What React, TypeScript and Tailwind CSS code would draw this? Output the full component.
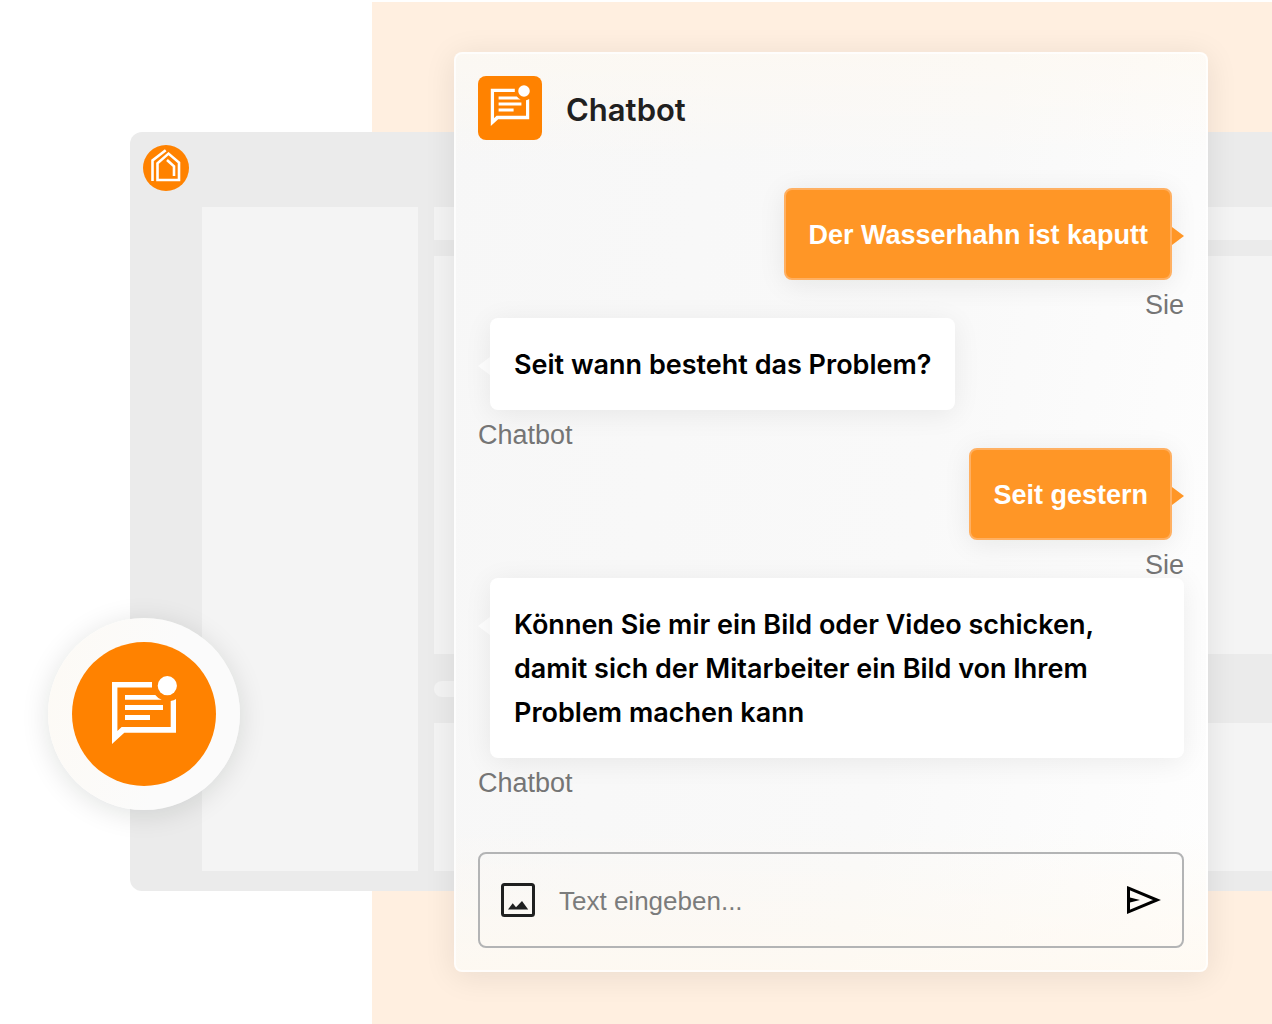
import type { ReactNode } from "react";

function ChatIcon({ className }: { className: string }) {
  return (
    <svg viewBox="0 0 80 80" className={className} fill="#fff" aria-hidden="true">
      <path d="M8 8H48V13.4H13.4V57L17.6 53H66.7V27Q70 26.400 72 25V58.700H20.300L8 70Z" />
      <path d="M21 21H51.300Q54 24.500 57.700 25.700H21ZM21 31H59V36H21ZM21 41H46V46H21Z" />
      <circle cx="63.300" cy="11.700" r="9.600" />
    </svg>
  );
}

function HouseLogo() {
  return (
    <svg viewBox="0 0 46 46" className="size-[46px]" fill="none" stroke="#fff" strokeWidth="2.600" aria-hidden="true">
      <circle cx="23" cy="23" r="23" fill="#ff8200" stroke="none" />
      <path d="M9.500 36V15.500L22.700 5.300" />
      <path d="M14.500 35H36V17.500L25.500 8.600L14.500 18.300Z" />
      <path d="M24 15L31 21.300V31" />
    </svg>
  );
}

function Dashboard() {
  return (
    <div className="col-start-1 row-start-1 mt-[132px] mb-[133px] ml-[130px] flex flex-col rounded-l-xl bg-[#ebebeb] pb-5">
      <div className="h-[75px] shrink-0 px-[13px] pt-[13px]">
        <HouseLogo />
      </div>
      <div className="flex flex-1 gap-4 pl-[72px]">
        <div className="w-[216px] bg-[#f4f4f4]" />
        <div className="flex flex-1 flex-col">
          <div className="h-[33px] bg-[#f4f4f4]" />
          <div className="mt-4 flex-1 bg-[#f4f4f4]" />
          <div className="flex h-[69px] items-center">
            <div className="h-4 w-40 rounded-full bg-[#f4f4f4]" />
          </div>
          <div className="h-[148px] bg-[#f4f4f4]" />
        </div>
      </div>
    </div>
  );
}

function UserMessage({ children }: { children: ReactNode }) {
  return (
    <div className="flex flex-col items-end">
      <div className="flex items-start">
        <p className="rounded-lg border-2 border-[#ffb062] bg-[#ff9626] px-[22px] pt-[23px] pb-[21px] font-['Liberation_Sans',sans-serif] text-[27px] leading-[44px] font-bold text-white shadow-[0_4px_28px_rgba(0,20,15,0.08)]">
          {children}
        </p>
        <svg viewBox="0 0 12 18" className="mt-[39px] h-[18px] w-3" aria-hidden="true">
          <path d="M0 0L12 9L0 18Z" fill="#ff9626" />
        </svg>
      </div>
      <span className="pt-3 font-['Liberation_Sans',sans-serif] text-[27px] leading-[26px] text-[#757575]">Sie</span>
    </div>
  );
}

function BotMessage({ children }: { children: ReactNode }) {
  return (
    <div className="flex flex-col items-start">
      <div className="flex items-start">
        <svg viewBox="0 0 12 18" className="mt-[39px] h-[18px] w-3 shrink-0" aria-hidden="true">
          <path d="M12 0L0 9L12 18Z" fill="#fff" />
        </svg>
        <p className="rounded-lg bg-white px-6 pt-[25px] pb-[23px] text-[27px] leading-[44px] font-[560] text-black shadow-[0_4px_28px_rgba(0,20,15,0.07)]">
          {children}
        </p>
      </div>
      <span className="pt-3 font-['Liberation_Sans',sans-serif] text-[27px] leading-[26px] text-[#757575]">Chatbot</span>
    </div>
  );
}

function Composer() {
  return (
    <form
      className="mt-14 flex h-24 items-center gap-6 rounded-lg border-2 border-[#b3b4b5] px-[21px]"
      onSubmit={(e) => e.preventDefault()}
    >
      <button type="button" aria-label="Bild anhängen">
        <svg viewBox="0 0 34 34" className="size-[34px]" aria-hidden="true">
          <rect x="1.500" y="1.500" width="31" height="31" rx="2" fill="none" stroke="#1f2020" strokeWidth="3" />
          <path d="M7 26.500L11.700 20.300L15 24.200L21 18L27.200 26.500Z" fill="#1f2020" />
        </svg>
      </button>
      <input
        type="text"
        aria-label="Nachricht"
        placeholder="Text eingeben..."
        className="min-w-0 flex-1 bg-transparent pt-0.5 font-['Liberation_Sans',sans-serif] text-[26px] text-black outline-none placeholder:text-[#7b7c7c]"
      />
      <button type="submit" aria-label="Senden">
        <svg viewBox="0 0 36 30" className="h-[30px] w-9" aria-hidden="true">
          <path d="M3.500 3.200L32 15L3.500 26.800Z" fill="none" stroke="#000" strokeWidth="3" />
          <path d="M4 12.300L15 15L4 17.700Z" fill="#000" />
        </svg>
      </button>
    </form>
  );
}

export default function App() {
  return (
    <main className="grid min-h-screen grid-cols-1 overflow-hidden bg-white font-['Inter','Liberation_Sans',sans-serif]">
      <div className="col-start-1 row-start-1 mt-0.5 ml-[372px] bg-[#ffefe0]" />
      <Dashboard />
      <section className="col-start-1 row-start-1 my-[52px] mr-16 ml-[454px] flex flex-col self-start rounded-lg bg-[linear-gradient(180deg,rgba(255,249,240,0.6)_0%,rgba(255,249,240,0)_12%,rgba(255,249,240,0)_84%,rgba(255,249,240,0.8)_100%),linear-gradient(100deg,#f7f7f7_0%,#f9f9f9_60%,#fefefe_100%)] p-6 shadow-[inset_0_0_0_2px_rgba(255,255,255,0.7),0_4px_32px_rgba(0,25,20,0.09)]">
        <header className="mb-12 flex items-center gap-6">
          <div className="flex size-16 items-center justify-center rounded-lg bg-[#ff8200]">
            <ChatIcon className="size-12" />
          </div>
          <h1 className="pt-1 text-[31px] leading-10 font-[560] text-[#1f2020]">Chatbot</h1>
        </header>
        <UserMessage>Der Wasserhahn ist kaputt</UserMessage>
        <BotMessage>Seit wann besteht das Problem?</BotMessage>
        <UserMessage>Seit gestern</UserMessage>
        <BotMessage>
          Können Sie mir ein Bild oder Video schicken, damit sich der Mitarbeiter ein Bild von Ihrem Problem machen kann
        </BotMessage>
        <Composer />
      </section>
      <button
        type="button"
        aria-label="Chat öffnen"
        className="col-start-1 row-start-1 mt-[618px] ml-12 self-start justify-self-start rounded-full bg-[linear-gradient(100deg,#fdfaf5,#fbfbfb_60%,#fbfbfb)] p-6 shadow-[0_4px_28px_rgba(0,25,20,0.12)]"
      >
        <span className="flex size-36 items-center justify-center rounded-full bg-[#ff8200]">
          <ChatIcon className="size-20" />
        </span>
      </button>
    </main>
  );
}
